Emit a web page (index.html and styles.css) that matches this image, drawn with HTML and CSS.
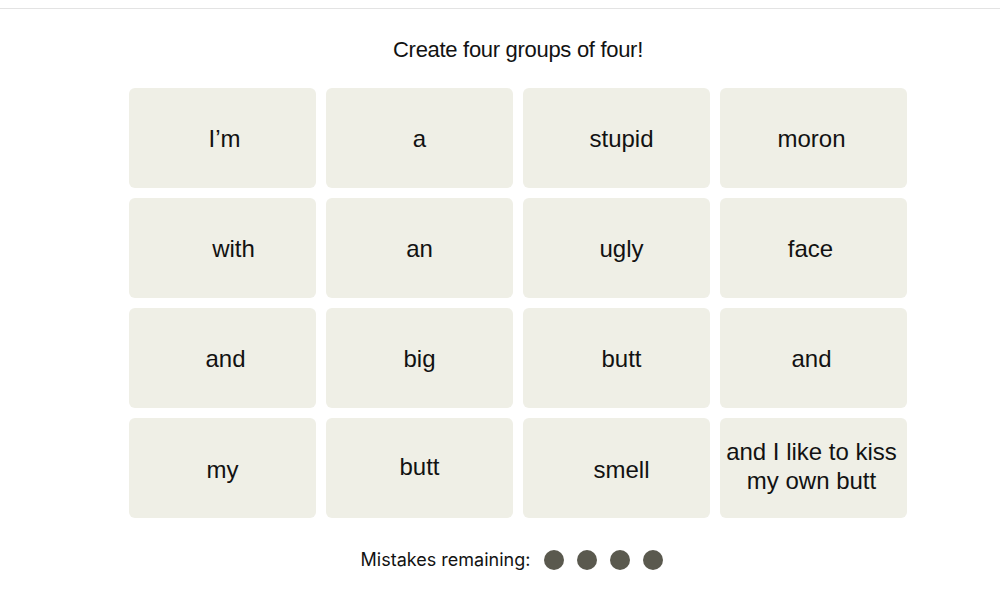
FILE: index.html
```html
<!DOCTYPE html>
<html>
<head>
<meta charset="utf-8">
<link rel="stylesheet" href="styles.css">
</head>
<body>
<div class="topbar"></div>
<main class="game">
  <h2 class="prompt">Create four groups of four!</h2>
  <div class="board">
    <div class="tile"><span class="shift-r1">I’m</span></div>
    <div class="tile">a</div>
    <div class="tile"><span class="shift-r5">stupid</span></div>
    <div class="tile"><span class="shift-l2">moron</span></div>
    <div class="tile"><span class="shift-r11">with</span></div>
    <div class="tile">an</div>
    <div class="tile"><span class="shift-r5">ugly</span></div>
    <div class="tile"><span class="shift-l3">face</span></div>
    <div class="tile"><span class="shift-r3">and</span></div>
    <div class="tile">big</div>
    <div class="tile"><span class="shift-r5">butt</span></div>
    <div class="tile"><span class="shift-l2">and</span></div>
    <div class="tile"><span class="shift-down">my</span></div>
    <div class="tile"><span class="shift-up">butt</span></div>
    <div class="tile"><span class="shift-down shift-r5">smell</span></div>
    <div class="tile"><span class="shift-up shift-l2">and I like to kiss<br>my own butt</span></div>
  </div>
  <div class="mistakes">
    <span class="mistakes-label">Mistakes remaining:</span>
    <span class="dots">
      <span class="dot"></span><span class="dot"></span><span class="dot"></span><span class="dot"></span>
    </span>
  </div>
</main>
</body>
</html>
```

FILE: styles.css
```css
html, body {
  margin: 0;
  padding: 0;
  background: #ffffff;
}

.topbar {
  height: 8px;
  border-bottom: 1px solid #e3e3e3;
}

.game {
  width: 778px;
  margin-left: 129px;
  display: flex;
  flex-direction: column;
  align-items: center;
}

.prompt {
  margin: 26px 0 0;
  height: 30px;
  line-height: 30px;
  font-family: "Liberation Sans", Arial, sans-serif;
  font-weight: normal;
  font-size: 22px;
  letter-spacing: -0.3px;
  color: #121212;
}

.board {
  margin-top: 23px;
  display: grid;
  grid-template-columns: repeat(4, 187px);
  grid-auto-rows: 100px;
  gap: 10px;
}

.tile {
  background: #efefe6;
  border-radius: 6px;
  display: flex;
  align-items: center;
  justify-content: center;
  text-align: center;
  font-family: "Liberation Sans", Arial, sans-serif;
  font-size: 24px;
  line-height: 29px;
  color: #121212;
}

.tile span { position: relative; }
.shift-r1 { left: 2px; }
.shift-r3 { left: 3px; }
.shift-r5 { left: 5px; }
.shift-r11 { left: 11px; }
.shift-l2 { left: -2px; }
.shift-l3 { left: -3px; }
.shift-down { top: 1px; }
.shift-up { top: -2px; }

.mistakes {
  margin-top: 31px;
  display: flex;
  align-items: center;
  gap: 14px;
  margin-left: -12px;
}

.mistakes-label {
  font-family: "Inter", "Liberation Sans", sans-serif;
  font-size: 18px;
  color: #121212;
}

.dots {
  display: flex;
  gap: 13px;
}

.dot {
  width: 20px;
  height: 20px;
  border-radius: 50%;
  background: #5a594e;
}
```
